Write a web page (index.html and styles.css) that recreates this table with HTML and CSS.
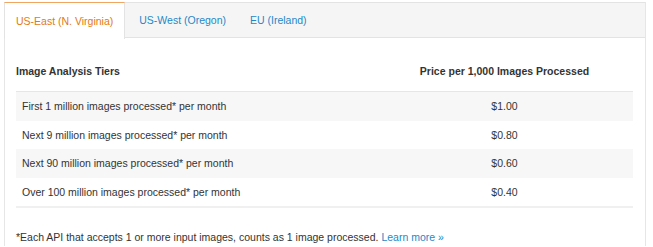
FILE: index.html
```html
<!DOCTYPE html>
<html lang="en">
<head>
    <meta charset="UTF-8">
    <title>Pricing</title>
    <link rel="stylesheet" href="styles.css">
</head>
<body>
    <div class="panel">
        <div class="tabs">
            <a class="tab active">US-East (N. Virginia)</a>
            <a class="tab">US-West (Oregon)</a>
            <a class="tab">EU (Ireland)</a>
        </div>
        <div class="content">
            <table class="tiers">
                <thead>
                    <tr>
                        <th class="tier-col">Image Analysis Tiers</th>
                        <th class="price-col">Price per 1,000 Images Processed</th>
                    </tr>
                </thead>
                <tbody>
                    <tr><td>First 1 million images processed* per month</td><td class="price">$1.00</td></tr>
                    <tr><td>Next 9 million images processed* per month</td><td class="price">$0.80</td></tr>
                    <tr><td>Next 90 million images processed* per month</td><td class="price">$0.60</td></tr>
                    <tr><td>Over 100 million images processed* per month</td><td class="price">$0.40</td></tr>
                </tbody>
            </table>
            <p class="note">*Each API that accepts 1 or more input images, counts as 1 image processed. <a class="link">Learn more »</a></p>
        </div>
    </div>
</body>
</html>
```
FILE: styles.css
```css
* {
    margin: 0;
    padding: 0;
    box-sizing: border-box;
}

body {
    font-family: "Liberation Sans", Arial, sans-serif;
    font-size: 10.5px;
    color: #333;
    background: #fff;
    padding: 2px 0 0 4px;
}

.panel {
    width: 642px;
    border-left: 1px solid #e6e6e6;
    border-right: 1px solid #e6e6e6;
}

.tabs {
    display: flex;
    height: 36px;
    background: #f5f5f5;
    border-top: 1px solid #e3e3e3;
    border-bottom: 1px solid #e3e3e3;
}

.tab {
    display: flex;
    align-items: center;
    padding: 0 12px;
    color: #1e88c7;
    cursor: pointer;
}

.tab.active {
    color: #e47911;
    background: #fff;
    margin: -1px 2px -1px -1px;
    padding: 0 11px;
    border-top: 1px solid #f0a560;
    border-left: 1px solid #e3e3e3;
    border-right: 1px solid #e3e3e3;
    height: 37px;
}

.content {
    padding: 15px 12px 0 11px;
}

.tiers {
    width: 617px;
    border-collapse: collapse;
}

.tiers th {
    font-weight: bold;
    text-align: left;
    vertical-align: bottom;
    padding: 8px 0 10px;
    line-height: 20px;
    border-bottom: 1px solid #e6e6e6;
}

.tiers th.tier-col {
    width: 360px;
}

.tiers th.price-col {
    text-align: center;
}

.tiers td {
    padding: 5px 6px;
    line-height: 18.5px;
}

.tiers td.price {
    text-align: center;
}

.tiers tbody tr:nth-child(odd) {
    background: #f7f7f7;
}

.tiers tbody tr:last-child td {
    border-bottom: 2px solid #f0f0f0;
}

.note {
    margin-top: 20px;
    line-height: 18px;
}

.link {
    color: #1e88c7;
    cursor: pointer;
}
```
